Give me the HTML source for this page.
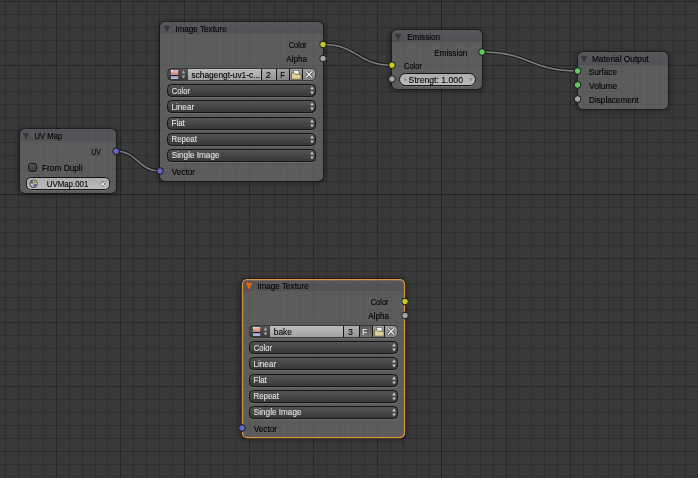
<!DOCTYPE html>
<html><head><meta charset="utf-8"><style>html,body{margin:0;padding:0;background:#393939;overflow:hidden;width:698px;height:478px}text{font-family:'Liberation Sans',sans-serif}</style></head>
<body><svg width="698" height="478" viewBox="0 0 698 478" style="will-change:transform;display:block;font-family:'Liberation Sans',sans-serif"><defs>
<linearGradient id="hdr" x1="0" y1="0" x2="0" y2="1"><stop offset="0" stop-color="rgba(105,104,111,0.65)"/><stop offset="1" stop-color="rgba(96,95,102,0.65)"/></linearGradient>
<linearGradient id="menu" x1="0" y1="0" x2="0" y2="1"><stop offset="0" stop-color="#545454"/><stop offset="1" stop-color="#383838"/></linearGradient>
<linearGradient id="light" x1="0" y1="0" x2="0" y2="1"><stop offset="0" stop-color="#bebebe"/><stop offset="1" stop-color="#a2a2a2"/></linearGradient>
<linearGradient id="light2" x1="0" y1="0" x2="0" y2="1"><stop offset="0" stop-color="#b0b0b0"/><stop offset="1" stop-color="#949494"/></linearGradient>
<linearGradient id="mid" x1="0" y1="0" x2="0" y2="1"><stop offset="0" stop-color="#a0a0a0"/><stop offset="1" stop-color="#858585"/></linearGradient>
<linearGradient id="fsel" x1="0" y1="0" x2="0" y2="1"><stop offset="0" stop-color="#5a5a5a"/><stop offset="1" stop-color="#727272"/></linearGradient>
<linearGradient id="thumb" x1="0" y1="0" x2="0" y2="1"><stop offset="0" stop-color="#e8d0cc"/><stop offset="0.2" stop-color="#e0a8a0"/><stop offset="0.5" stop-color="#c88c88"/><stop offset="0.58" stop-color="#201818"/><stop offset="0.68" stop-color="#201818"/><stop offset="0.72" stop-color="#9c9ccc"/><stop offset="1" stop-color="#b8b8e0"/></linearGradient>
<linearGradient id="pill" x1="0" y1="0" x2="0" y2="1"><stop offset="0" stop-color="#acacac"/><stop offset="1" stop-color="#bcbcbc"/></linearGradient>
</defs><rect x="0" y="0" width="698" height="478" fill="#393939"/><path d="M5 0h1v478h-1zM18 0h1v478h-1zM30 0h1v478h-1zM43 0h1v478h-1zM69 0h1v478h-1zM82 0h1v478h-1zM95 0h1v478h-1zM107 0h1v478h-1zM133 0h1v478h-1zM146 0h1v478h-1zM159 0h1v478h-1zM172 0h1v478h-1zM197 0h1v478h-1zM210 0h1v478h-1zM223 0h1v478h-1zM236 0h1v478h-1zM262 0h1v478h-1zM274 0h1v478h-1zM287 0h1v478h-1zM300 0h1v478h-1zM326 0h1v478h-1zM339 0h1v478h-1zM351 0h1v478h-1zM364 0h1v478h-1zM390 0h1v478h-1zM403 0h1v478h-1zM416 0h1v478h-1zM429 0h1v478h-1zM454 0h1v478h-1zM467 0h1v478h-1zM480 0h1v478h-1zM493 0h1v478h-1zM518 0h1v478h-1zM531 0h1v478h-1zM544 0h1v478h-1zM557 0h1v478h-1zM583 0h1v478h-1zM596 0h1v478h-1zM608 0h1v478h-1zM621 0h1v478h-1zM647 0h1v478h-1zM660 0h1v478h-1zM673 0h1v478h-1zM685 0h1v478h-1zM0 14h698v1h-698zM0 27h698v1h-698zM0 40h698v1h-698zM0 52h698v1h-698zM0 78h698v1h-698zM0 91h698v1h-698zM0 104h698v1h-698zM0 117h698v1h-698zM0 142h698v1h-698zM0 155h698v1h-698zM0 168h698v1h-698zM0 181h698v1h-698zM0 207h698v1h-698zM0 219h698v1h-698zM0 232h698v1h-698zM0 245h698v1h-698zM0 271h698v1h-698zM0 284h698v1h-698zM0 297h698v1h-698zM0 309h698v1h-698zM0 335h698v1h-698zM0 348h698v1h-698zM0 361h698v1h-698zM0 374h698v1h-698zM0 399h698v1h-698zM0 412h698v1h-698zM0 425h698v1h-698zM0 438h698v1h-698zM0 464h698v1h-698zM0 476h698v1h-698z" fill="#2f2f2f"/><path d="M56 0h1v478h-1zM120 0h1v478h-1zM184 0h1v478h-1zM249 0h1v478h-1zM313 0h1v478h-1zM377 0h1v478h-1zM506 0h1v478h-1zM570 0h1v478h-1zM634 0h1v478h-1zM0 1h698v1h-698zM0 65h698v1h-698zM0 130h698v1h-698zM0 258h698v1h-698zM0 322h698v1h-698zM0 386h698v1h-698zM0 451h698v1h-698z" fill="#292929"/><path d="M441 0h1v478h-1zM0 194h698v1h-698z" fill="#232323"/><path d="M116 151.2C138.0 151.2 138.0 171 160 171" fill="none" stroke="#1c1c1c" stroke-width="3.6"/><path d="M116 151.2C138.0 151.2 138.0 171 160 171" fill="none" stroke="#7e7e7e" stroke-width="1.5"/><path d="M323 44.5C357.5 44.5 357.5 65.2 392 65.2" fill="none" stroke="#1c1c1c" stroke-width="3.6"/><path d="M323 44.5C357.5 44.5 357.5 65.2 392 65.2" fill="none" stroke="#7e7e7e" stroke-width="1.5"/><path d="M482 52C529.8 52 529.8 71 577.6 71" fill="none" stroke="#1c1c1c" stroke-width="3.6"/><path d="M482 52C529.8 52 529.8 71 577.6 71" fill="none" stroke="#7e7e7e" stroke-width="1.5"/><path d="M25.00 130.00H111.00A6 6 0 0 1 117.00 136.00V188.00A6 6 0 0 1 111.00 194.00H25.00A6 6 0 0 1 19.00 188.00V136.00A6 6 0 0 1 25.00 130.00ZM25.00 129.00H111.00A5 5 0 0 1 116.00 134.00V188.00A5 5 0 0 1 111.00 193.00H25.00A5 5 0 0 1 20.00 188.00V134.00A5 5 0 0 1 25.00 129.00Z" fill="rgba(0,0,0,0.035)" fill-rule="evenodd"/><path d="M25.00 129.00H111.00A7 7 0 0 1 118.00 136.00V188.00A7 7 0 0 1 111.00 195.00H25.00A7 7 0 0 1 18.00 188.00V136.00A7 7 0 0 1 25.00 129.00ZM25.00 129.00H111.00A5 5 0 0 1 116.00 134.00V188.00A5 5 0 0 1 111.00 193.00H25.00A5 5 0 0 1 20.00 188.00V134.00A5 5 0 0 1 25.00 129.00Z" fill="rgba(0,0,0,0.035)" fill-rule="evenodd"/><path d="M25.00 128.00H111.00A8 8 0 0 1 119.00 136.00V188.00A8 8 0 0 1 111.00 196.00H25.00A8 8 0 0 1 17.00 188.00V136.00A8 8 0 0 1 25.00 128.00ZM25.00 129.00H111.00A5 5 0 0 1 116.00 134.00V188.00A5 5 0 0 1 111.00 193.00H25.00A5 5 0 0 1 20.00 188.00V134.00A5 5 0 0 1 25.00 129.00Z" fill="rgba(0,0,0,0.035)" fill-rule="evenodd"/><path d="M25.00 127.00H111.00A9 9 0 0 1 120.00 136.00V188.00A9 9 0 0 1 111.00 197.00H25.00A9 9 0 0 1 16.00 188.00V136.00A9 9 0 0 1 25.00 127.00ZM25.00 129.00H111.00A5 5 0 0 1 116.00 134.00V188.00A5 5 0 0 1 111.00 193.00H25.00A5 5 0 0 1 20.00 188.00V134.00A5 5 0 0 1 25.00 129.00Z" fill="rgba(0,0,0,0.035)" fill-rule="evenodd"/><path d="M25.00 126.00H111.00A10 10 0 0 1 121.00 136.00V188.00A10 10 0 0 1 111.00 198.00H25.00A10 10 0 0 1 15.00 188.00V136.00A10 10 0 0 1 25.00 126.00ZM25.00 129.00H111.00A5 5 0 0 1 116.00 134.00V188.00A5 5 0 0 1 111.00 193.00H25.00A5 5 0 0 1 20.00 188.00V134.00A5 5 0 0 1 25.00 129.00Z" fill="rgba(0,0,0,0.035)" fill-rule="evenodd"/><path d="M25.00 125.00H111.00A11 11 0 0 1 122.00 136.00V188.00A11 11 0 0 1 111.00 199.00H25.00A11 11 0 0 1 14.00 188.00V136.00A11 11 0 0 1 25.00 125.00ZM25.00 129.00H111.00A5 5 0 0 1 116.00 134.00V188.00A5 5 0 0 1 111.00 193.00H25.00A5 5 0 0 1 20.00 188.00V134.00A5 5 0 0 1 25.00 129.00Z" fill="rgba(0,0,0,0.035)" fill-rule="evenodd"/><path d="M25.00 128.50H111.00A5.5 5.5 0 0 1 116.50 134.00V188.00A5.5 5.5 0 0 1 111.00 193.50H25.00A5.5 5.5 0 0 1 19.50 188.00V134.00A5.5 5.5 0 0 1 25.00 128.50Z" fill="none" stroke="rgba(0,0,0,0.34)" stroke-width="1"/><path d="M20.00 140.50H116.00V188.00A5 5 0 0 1 111.00 193.00H25.00A5 5 0 0 1 20.00 188.00V140.50Z" fill="rgba(110,110,110,0.65)"/><path d="M25.00 129.00H111.00A5 5 0 0 1 116.00 134.00V140.50H20.00V134.00A5 5 0 0 1 25.00 129.00Z" fill="url(#hdr)"/><path d="M22.6 132.8h6.8l-3.4 7z" fill="#38383a"/><text x="34.61" y="138.90" font-size="8.2" fill="#000" stroke="#000" stroke-width="0.1" textLength="27.51" lengthAdjust="spacingAndGlyphs">UV Map</text><text x="91.16" y="154.80" font-size="8.2" fill="#000" stroke="#000" stroke-width="0.1" textLength="9.77" lengthAdjust="spacingAndGlyphs">UV</text><path d="M30.70 164.50H34.30A2.2 2.2 0 0 1 36.50 166.70V170.30A2.2 2.2 0 0 1 34.30 172.50H30.70A2.2 2.2 0 0 1 28.50 170.30V166.70A2.2 2.2 0 0 1 30.70 164.50Z" fill="none" stroke="rgba(255,255,255,0.10)" stroke-width="1"/><path d="M30.70 163.50H34.30A2.2 2.2 0 0 1 36.50 165.70V169.30A2.2 2.2 0 0 1 34.30 171.50H30.70A2.2 2.2 0 0 1 28.50 169.30V165.70A2.2 2.2 0 0 1 30.70 163.50Z" fill="url(#menu)" stroke="#151515" stroke-width="1"/><text x="42.02" y="170.80" font-size="8.2" fill="#000" stroke="#000" stroke-width="0.1" textLength="40.54" lengthAdjust="spacingAndGlyphs">From Dupli</text><path d="M30.50 178.50H105.50A4 4 0 0 1 109.50 182.50V186.50A4 4 0 0 1 105.50 190.50H30.50A4 4 0 0 1 26.50 186.50V182.50A4 4 0 0 1 30.50 178.50Z" fill="none" stroke="rgba(255,255,255,0.10)" stroke-width="1"/><path d="M30.50 177.50H105.50A4 4 0 0 1 109.50 181.50V185.50A4 4 0 0 1 105.50 189.50H30.50A4 4 0 0 1 26.50 185.50V181.50A4 4 0 0 1 30.50 177.50Z" fill="url(#pill)" stroke="#151515" stroke-width="1"/><circle cx="33.5" cy="183.8" r="3.8" fill="#e8e8d8" stroke="#2a2a2a" stroke-width="0.9"/><path d="M33.5 183.8h3.4a3.4 3.4 0 0 1 -3.4 3.4z M33.5 183.8h-3.4a3.4 3.4 0 0 1 3.4 -3.4z" fill="#5a78b8"/><path d="M33.5 183.8v-3.4a3.4 3.4 0 0 1 3.4 3.4z" fill="#d8c860"/><path d="M30.3 182.3h6.4M30.3 185.3h6.4M32 180.5v6.6M35 180.5v6.6" stroke="#404040" stroke-width="0.5" opacity="0.7"/><text x="46.69" y="186.80" font-size="8.2" fill="#000" stroke="#000" stroke-width="0.1" textLength="41.69" lengthAdjust="spacingAndGlyphs">UVMap.001</text><path d="M100.6 181.8l4.2 4.2M104.8 181.8l-4.2 4.2" stroke="#404040" stroke-width="2.4"/><path d="M100.6 181.8l4.2 4.2M104.8 181.8l-4.2 4.2" stroke="#f4f4f4" stroke-width="1.2"/><circle cx="116" cy="151.2" r="3.3" fill="#6363c7" stroke="#181818" stroke-width="1.0"/><path d="M165.00 23.00H318.00A6 6 0 0 1 324.00 29.00V176.00A6 6 0 0 1 318.00 182.00H165.00A6 6 0 0 1 159.00 176.00V29.00A6 6 0 0 1 165.00 23.00ZM165.00 22.00H318.00A5 5 0 0 1 323.00 27.00V176.00A5 5 0 0 1 318.00 181.00H165.00A5 5 0 0 1 160.00 176.00V27.00A5 5 0 0 1 165.00 22.00Z" fill="rgba(0,0,0,0.035)" fill-rule="evenodd"/><path d="M165.00 22.00H318.00A7 7 0 0 1 325.00 29.00V176.00A7 7 0 0 1 318.00 183.00H165.00A7 7 0 0 1 158.00 176.00V29.00A7 7 0 0 1 165.00 22.00ZM165.00 22.00H318.00A5 5 0 0 1 323.00 27.00V176.00A5 5 0 0 1 318.00 181.00H165.00A5 5 0 0 1 160.00 176.00V27.00A5 5 0 0 1 165.00 22.00Z" fill="rgba(0,0,0,0.035)" fill-rule="evenodd"/><path d="M165.00 21.00H318.00A8 8 0 0 1 326.00 29.00V176.00A8 8 0 0 1 318.00 184.00H165.00A8 8 0 0 1 157.00 176.00V29.00A8 8 0 0 1 165.00 21.00ZM165.00 22.00H318.00A5 5 0 0 1 323.00 27.00V176.00A5 5 0 0 1 318.00 181.00H165.00A5 5 0 0 1 160.00 176.00V27.00A5 5 0 0 1 165.00 22.00Z" fill="rgba(0,0,0,0.035)" fill-rule="evenodd"/><path d="M165.00 20.00H318.00A9 9 0 0 1 327.00 29.00V176.00A9 9 0 0 1 318.00 185.00H165.00A9 9 0 0 1 156.00 176.00V29.00A9 9 0 0 1 165.00 20.00ZM165.00 22.00H318.00A5 5 0 0 1 323.00 27.00V176.00A5 5 0 0 1 318.00 181.00H165.00A5 5 0 0 1 160.00 176.00V27.00A5 5 0 0 1 165.00 22.00Z" fill="rgba(0,0,0,0.035)" fill-rule="evenodd"/><path d="M165.00 19.00H318.00A10 10 0 0 1 328.00 29.00V176.00A10 10 0 0 1 318.00 186.00H165.00A10 10 0 0 1 155.00 176.00V29.00A10 10 0 0 1 165.00 19.00ZM165.00 22.00H318.00A5 5 0 0 1 323.00 27.00V176.00A5 5 0 0 1 318.00 181.00H165.00A5 5 0 0 1 160.00 176.00V27.00A5 5 0 0 1 165.00 22.00Z" fill="rgba(0,0,0,0.035)" fill-rule="evenodd"/><path d="M165.00 18.00H318.00A11 11 0 0 1 329.00 29.00V176.00A11 11 0 0 1 318.00 187.00H165.00A11 11 0 0 1 154.00 176.00V29.00A11 11 0 0 1 165.00 18.00ZM165.00 22.00H318.00A5 5 0 0 1 323.00 27.00V176.00A5 5 0 0 1 318.00 181.00H165.00A5 5 0 0 1 160.00 176.00V27.00A5 5 0 0 1 165.00 22.00Z" fill="rgba(0,0,0,0.035)" fill-rule="evenodd"/><path d="M165.00 21.50H318.00A5.5 5.5 0 0 1 323.50 27.00V176.00A5.5 5.5 0 0 1 318.00 181.50H165.00A5.5 5.5 0 0 1 159.50 176.00V27.00A5.5 5.5 0 0 1 165.00 21.50Z" fill="none" stroke="rgba(0,0,0,0.34)" stroke-width="1"/><path d="M160.00 34.00H323.00V176.00A5 5 0 0 1 318.00 181.00H165.00A5 5 0 0 1 160.00 176.00V34.00Z" fill="rgba(110,110,110,0.65)"/><path d="M165.00 22.00H318.00A5 5 0 0 1 323.00 27.00V34.00H160.00V27.00A5 5 0 0 1 165.00 22.00Z" fill="url(#hdr)"/><path d="M163.6 25.8h6.8l-3.4 7z" fill="#38383a"/><text x="175.16" y="31.90" font-size="8.2" fill="#000" stroke="#000" stroke-width="0.1" textLength="51.59" lengthAdjust="spacingAndGlyphs">Image Texture</text><text x="288.72" y="47.90" font-size="8.2" fill="#000" stroke="#000" stroke-width="0.1" textLength="17.90" lengthAdjust="spacingAndGlyphs">Color</text><text x="286.18" y="61.80" font-size="8.2" fill="#000" stroke="#000" stroke-width="0.1" textLength="20.82" lengthAdjust="spacingAndGlyphs">Alpha</text><path d="M171.50 69.50H311.50A4 4 0 0 1 315.50 73.50V77.50A4 4 0 0 1 311.50 81.50H171.50A4 4 0 0 1 167.50 77.50V73.50A4 4 0 0 1 171.50 69.50Z" fill="none" stroke="rgba(255,255,255,0.10)" stroke-width="1"/><path d="M171.50 68.50H311.50A4 4 0 0 1 315.50 72.50V76.50A4 4 0 0 1 311.50 80.50H171.50A4 4 0 0 1 167.50 76.50V72.50A4 4 0 0 1 171.50 68.50Z" fill="#151515"/><path d="M171.50 69.00H188.00V80.00H171.50A3.5 3.5 0 0 1 168.00 76.50V72.50A3.5 3.5 0 0 1 171.50 69.00Z" fill="url(#menu)"/><rect x="171" y="70" width="7.2" height="9" fill="url(#thumb)"/><path d="M171 70h2l-2 2z" fill="#f8f8f8"/><path d="M181.7 73.6L183.5 70.2L185.3 73.6Z M181.7 75.4L183.5 78.6L185.3 75.4Z" fill="#a8a8a8"/><rect x="188" y="69" width="73" height="11" fill="url(#light)"/><text x="191.47" y="78.00" font-size="8.2" fill="#000" stroke="#000" stroke-width="0.1" textLength="68.69" lengthAdjust="spacingAndGlyphs">schagengt-uv1-c...</text><rect x="262" y="69" width="14" height="11" fill="url(#light2)"/><text x="265.84" y="77.80" font-size="8.2" fill="#000" stroke="#000" stroke-width="0.1" textLength="5.13" lengthAdjust="spacingAndGlyphs">2</text><rect x="277" y="69" width="12" height="11" fill="url(#mid)"/><text x="280.16" y="77.80" font-size="8.2" fill="#000" stroke="#000" stroke-width="0.1" textLength="4.75" lengthAdjust="spacingAndGlyphs">F</text><rect x="290" y="69" width="12" height="11" fill="url(#mid)"/><rect x="293.5" y="70.5" width="5.5" height="4" fill="#f4f4f4" stroke="#505050" stroke-width="0.5"/><path d="M291.5 73h3l1 1.2h5.5v5h-9.5z" fill="#dcd09a" stroke="#4a4428" stroke-width="0.6"/><path d="M303.00 69.00H311.50A3.5 3.5 0 0 1 315.00 72.50V76.50A3.5 3.5 0 0 1 311.50 80.00H303.00V69.00Z" fill="url(#mid)"/><path d="M306.0 71.5l6 6M312.0 71.5l-6 6" stroke="rgba(30,30,30,0.6)" stroke-width="2.8"/><path d="M306.0 71.5l6 6M312.0 71.5l-6 6" stroke="#f0f0f0" stroke-width="1.2"/><path d="M171.50 85.50H311.50A4 4 0 0 1 315.50 89.50V93.50A4 4 0 0 1 311.50 97.50H171.50A4 4 0 0 1 167.50 93.50V89.50A4 4 0 0 1 171.50 85.50Z" fill="none" stroke="rgba(255,255,255,0.10)" stroke-width="1"/><path d="M171.50 84.50H311.50A4 4 0 0 1 315.50 88.50V92.50A4 4 0 0 1 311.50 96.50H171.50A4 4 0 0 1 167.50 92.50V88.50A4 4 0 0 1 171.50 84.50Z" fill="url(#menu)" stroke="#151515" stroke-width="1"/><text x="171.82" y="93.80" font-size="8.2" fill="#e4e4e4" stroke="#e4e4e4" stroke-width="0.1" textLength="18.11" lengthAdjust="spacingAndGlyphs">Color</text><path d="M310.2 89.6L312.0 86.2L313.8 89.6Z M310.2 91.4L312.0 94.6L313.8 91.4Z" fill="#c8c8c8"/><path d="M171.50 101.50H311.50A4 4 0 0 1 315.50 105.50V109.50A4 4 0 0 1 311.50 113.50H171.50A4 4 0 0 1 167.50 109.50V105.50A4 4 0 0 1 171.50 101.50Z" fill="none" stroke="rgba(255,255,255,0.10)" stroke-width="1"/><path d="M171.50 100.50H311.50A4 4 0 0 1 315.50 104.50V108.50A4 4 0 0 1 311.50 112.50H171.50A4 4 0 0 1 167.50 108.50V104.50A4 4 0 0 1 171.50 100.50Z" fill="url(#menu)" stroke="#151515" stroke-width="1"/><text x="171.53" y="109.90" font-size="8.2" fill="#e4e4e4" stroke="#e4e4e4" stroke-width="0.1" textLength="22.60" lengthAdjust="spacingAndGlyphs">Linear</text><path d="M310.2 105.6L312.0 102.2L313.8 105.6Z M310.2 107.4L312.0 110.6L313.8 107.4Z" fill="#c8c8c8"/><path d="M171.50 118.50H311.50A4 4 0 0 1 315.50 122.50V126.50A4 4 0 0 1 311.50 130.50H171.50A4 4 0 0 1 167.50 126.50V122.50A4 4 0 0 1 171.50 118.50Z" fill="none" stroke="rgba(255,255,255,0.10)" stroke-width="1"/><path d="M171.50 117.50H311.50A4 4 0 0 1 315.50 121.50V125.50A4 4 0 0 1 311.50 129.50H171.50A4 4 0 0 1 167.50 125.50V121.50A4 4 0 0 1 171.50 117.50Z" fill="url(#menu)" stroke="#151515" stroke-width="1"/><text x="171.55" y="125.70" font-size="8.2" fill="#e4e4e4" stroke="#e4e4e4" stroke-width="0.1" textLength="13.26" lengthAdjust="spacingAndGlyphs">Flat</text><path d="M310.2 122.6L312.0 119.2L313.8 122.6Z M310.2 124.4L312.0 127.6L313.8 124.4Z" fill="#c8c8c8"/><path d="M171.50 134.50H311.50A4 4 0 0 1 315.50 138.50V142.50A4 4 0 0 1 311.50 146.50H171.50A4 4 0 0 1 167.50 142.50V138.50A4 4 0 0 1 171.50 134.50Z" fill="none" stroke="rgba(255,255,255,0.10)" stroke-width="1"/><path d="M171.50 133.50H311.50A4 4 0 0 1 315.50 137.50V141.50A4 4 0 0 1 311.50 145.50H171.50A4 4 0 0 1 167.50 141.50V137.50A4 4 0 0 1 171.50 133.50Z" fill="url(#menu)" stroke="#151515" stroke-width="1"/><text x="171.56" y="141.70" font-size="8.2" fill="#e4e4e4" stroke="#e4e4e4" stroke-width="0.1" textLength="25.30" lengthAdjust="spacingAndGlyphs">Repeat</text><path d="M310.2 138.6L312.0 135.2L313.8 138.6Z M310.2 140.4L312.0 143.6L313.8 140.4Z" fill="#c8c8c8"/><path d="M171.50 150.50H311.50A4 4 0 0 1 315.50 154.50V158.50A4 4 0 0 1 311.50 162.50H171.50A4 4 0 0 1 167.50 158.50V154.50A4 4 0 0 1 171.50 150.50Z" fill="none" stroke="rgba(255,255,255,0.10)" stroke-width="1"/><path d="M171.50 149.50H311.50A4 4 0 0 1 315.50 153.50V157.50A4 4 0 0 1 311.50 161.50H171.50A4 4 0 0 1 167.50 157.50V153.50A4 4 0 0 1 171.50 149.50Z" fill="url(#menu)" stroke="#151515" stroke-width="1"/><text x="171.83" y="157.60" font-size="8.2" fill="#e4e4e4" stroke="#e4e4e4" stroke-width="0.1" textLength="47.63" lengthAdjust="spacingAndGlyphs">Single Image</text><path d="M310.2 154.6L312.0 151.2L313.8 154.6Z M310.2 156.4L312.0 159.6L313.8 156.4Z" fill="#c8c8c8"/><text x="171.76" y="174.80" font-size="8.2" fill="#000" stroke="#000" stroke-width="0.1" textLength="23.27" lengthAdjust="spacingAndGlyphs">Vector</text><circle cx="323" cy="44.5" r="3.3" fill="#c8c829" stroke="#181818" stroke-width="1.0"/><circle cx="323" cy="58.5" r="3.3" fill="#a3a3a3" stroke="#181818" stroke-width="1.0"/><circle cx="160" cy="171" r="3.3" fill="#6363c7" stroke="#181818" stroke-width="1.0"/><path d="M247.00 280.00H400.00A6 6 0 0 1 406.00 286.00V433.00A6 6 0 0 1 400.00 439.00H247.00A6 6 0 0 1 241.00 433.00V286.00A6 6 0 0 1 247.00 280.00ZM247.00 279.00H400.00A5 5 0 0 1 405.00 284.00V433.00A5 5 0 0 1 400.00 438.00H247.00A5 5 0 0 1 242.00 433.00V284.00A5 5 0 0 1 247.00 279.00Z" fill="rgba(0,0,0,0.035)" fill-rule="evenodd"/><path d="M247.00 279.00H400.00A7 7 0 0 1 407.00 286.00V433.00A7 7 0 0 1 400.00 440.00H247.00A7 7 0 0 1 240.00 433.00V286.00A7 7 0 0 1 247.00 279.00ZM247.00 279.00H400.00A5 5 0 0 1 405.00 284.00V433.00A5 5 0 0 1 400.00 438.00H247.00A5 5 0 0 1 242.00 433.00V284.00A5 5 0 0 1 247.00 279.00Z" fill="rgba(0,0,0,0.035)" fill-rule="evenodd"/><path d="M247.00 278.00H400.00A8 8 0 0 1 408.00 286.00V433.00A8 8 0 0 1 400.00 441.00H247.00A8 8 0 0 1 239.00 433.00V286.00A8 8 0 0 1 247.00 278.00ZM247.00 279.00H400.00A5 5 0 0 1 405.00 284.00V433.00A5 5 0 0 1 400.00 438.00H247.00A5 5 0 0 1 242.00 433.00V284.00A5 5 0 0 1 247.00 279.00Z" fill="rgba(0,0,0,0.035)" fill-rule="evenodd"/><path d="M247.00 277.00H400.00A9 9 0 0 1 409.00 286.00V433.00A9 9 0 0 1 400.00 442.00H247.00A9 9 0 0 1 238.00 433.00V286.00A9 9 0 0 1 247.00 277.00ZM247.00 279.00H400.00A5 5 0 0 1 405.00 284.00V433.00A5 5 0 0 1 400.00 438.00H247.00A5 5 0 0 1 242.00 433.00V284.00A5 5 0 0 1 247.00 279.00Z" fill="rgba(0,0,0,0.035)" fill-rule="evenodd"/><path d="M247.00 276.00H400.00A10 10 0 0 1 410.00 286.00V433.00A10 10 0 0 1 400.00 443.00H247.00A10 10 0 0 1 237.00 433.00V286.00A10 10 0 0 1 247.00 276.00ZM247.00 279.00H400.00A5 5 0 0 1 405.00 284.00V433.00A5 5 0 0 1 400.00 438.00H247.00A5 5 0 0 1 242.00 433.00V284.00A5 5 0 0 1 247.00 279.00Z" fill="rgba(0,0,0,0.035)" fill-rule="evenodd"/><path d="M247.00 275.00H400.00A11 11 0 0 1 411.00 286.00V433.00A11 11 0 0 1 400.00 444.00H247.00A11 11 0 0 1 236.00 433.00V286.00A11 11 0 0 1 247.00 275.00ZM247.00 279.00H400.00A5 5 0 0 1 405.00 284.00V433.00A5 5 0 0 1 400.00 438.00H247.00A5 5 0 0 1 242.00 433.00V284.00A5 5 0 0 1 247.00 279.00Z" fill="rgba(0,0,0,0.035)" fill-rule="evenodd"/><path d="M247.00 278.50H400.00A5.5 5.5 0 0 1 405.50 284.00V433.00A5.5 5.5 0 0 1 400.00 438.50H247.00A5.5 5.5 0 0 1 241.50 433.00V284.00A5.5 5.5 0 0 1 247.00 278.50Z" fill="none" stroke="rgba(0,0,0,0.34)" stroke-width="1"/><path d="M242.00 291.00H405.00V433.00A5 5 0 0 1 400.00 438.00H247.00A5 5 0 0 1 242.00 433.00V291.00Z" fill="rgba(110,110,110,0.65)"/><path d="M247.00 279.00H400.00A5 5 0 0 1 405.00 284.00V291.00H242.00V284.00A5 5 0 0 1 247.00 279.00Z" fill="url(#hdr)"/><path d="M247.00 279.50H400.00A4.5 4.5 0 0 1 404.50 284.00V433.00A4.5 4.5 0 0 1 400.00 437.50H247.00A4.5 4.5 0 0 1 242.50 433.00V284.00A4.5 4.5 0 0 1 247.00 279.50Z" fill="none" stroke="#d8963e" stroke-width="1.25"/><path d="M245.6 282.8h6.8l-3.4 7z" fill="#e2651a"/><text x="257.16" y="288.90" font-size="8.2" fill="#000" stroke="#000" stroke-width="0.1" textLength="51.59" lengthAdjust="spacingAndGlyphs">Image Texture</text><text x="370.72" y="304.90" font-size="8.2" fill="#000" stroke="#000" stroke-width="0.1" textLength="17.90" lengthAdjust="spacingAndGlyphs">Color</text><text x="368.18" y="318.80" font-size="8.2" fill="#000" stroke="#000" stroke-width="0.1" textLength="20.82" lengthAdjust="spacingAndGlyphs">Alpha</text><path d="M253.50 326.50H393.50A4 4 0 0 1 397.50 330.50V334.50A4 4 0 0 1 393.50 338.50H253.50A4 4 0 0 1 249.50 334.50V330.50A4 4 0 0 1 253.50 326.50Z" fill="none" stroke="rgba(255,255,255,0.10)" stroke-width="1"/><path d="M253.50 325.50H393.50A4 4 0 0 1 397.50 329.50V333.50A4 4 0 0 1 393.50 337.50H253.50A4 4 0 0 1 249.50 333.50V329.50A4 4 0 0 1 253.50 325.50Z" fill="#151515"/><path d="M253.50 326.00H270.00V337.00H253.50A3.5 3.5 0 0 1 250.00 333.50V329.50A3.5 3.5 0 0 1 253.50 326.00Z" fill="url(#menu)"/><rect x="253" y="327" width="7.2" height="9" fill="url(#thumb)"/><path d="M253 327h2l-2 2z" fill="#f8f8f8"/><path d="M263.7 330.6L265.5 327.2L267.3 330.6Z M263.7 332.4L265.5 335.6L267.3 332.4Z" fill="#a8a8a8"/><rect x="270" y="326" width="73" height="11" fill="url(#light)"/><text x="273.87" y="335.00" font-size="8.2" fill="#000" stroke="#000" stroke-width="0.1" textLength="17.90" lengthAdjust="spacingAndGlyphs">bake</text><rect x="344" y="326" width="15" height="11" fill="url(#light2)"/><text x="347.96" y="334.80" font-size="8.2" fill="#000" stroke="#000" stroke-width="0.1" textLength="4.93" lengthAdjust="spacingAndGlyphs">3</text><rect x="360" y="326" width="12" height="11" fill="url(#fsel)"/><text x="362.16" y="334.80" font-size="8.2" fill="#f0f0f0" stroke="#f0f0f0" stroke-width="0.1" textLength="4.75" lengthAdjust="spacingAndGlyphs">F</text><rect x="373" y="326" width="11" height="11" fill="url(#mid)"/><rect x="376.5" y="327.5" width="5.5" height="4" fill="#f4f4f4" stroke="#505050" stroke-width="0.5"/><path d="M374.5 330h3l1 1.2h5.5v5h-9.5z" fill="#dcd09a" stroke="#4a4428" stroke-width="0.6"/><path d="M385.00 326.00H393.50A3.5 3.5 0 0 1 397.00 329.50V333.50A3.5 3.5 0 0 1 393.50 337.00H385.00V326.00Z" fill="url(#mid)"/><path d="M388.0 328.5l6 6M394.0 328.5l-6 6" stroke="rgba(30,30,30,0.6)" stroke-width="2.8"/><path d="M388.0 328.5l6 6M394.0 328.5l-6 6" stroke="#f0f0f0" stroke-width="1.2"/><path d="M253.50 342.50H393.50A4 4 0 0 1 397.50 346.50V350.50A4 4 0 0 1 393.50 354.50H253.50A4 4 0 0 1 249.50 350.50V346.50A4 4 0 0 1 253.50 342.50Z" fill="none" stroke="rgba(255,255,255,0.10)" stroke-width="1"/><path d="M253.50 341.50H393.50A4 4 0 0 1 397.50 345.50V349.50A4 4 0 0 1 393.50 353.50H253.50A4 4 0 0 1 249.50 349.50V345.50A4 4 0 0 1 253.50 341.50Z" fill="url(#menu)" stroke="#151515" stroke-width="1"/><text x="253.82" y="350.80" font-size="8.2" fill="#e4e4e4" stroke="#e4e4e4" stroke-width="0.1" textLength="18.11" lengthAdjust="spacingAndGlyphs">Color</text><path d="M392.2 346.6L394.0 343.2L395.8 346.6Z M392.2 348.4L394.0 351.6L395.8 348.4Z" fill="#c8c8c8"/><path d="M253.50 358.50H393.50A4 4 0 0 1 397.50 362.50V366.50A4 4 0 0 1 393.50 370.50H253.50A4 4 0 0 1 249.50 366.50V362.50A4 4 0 0 1 253.50 358.50Z" fill="none" stroke="rgba(255,255,255,0.10)" stroke-width="1"/><path d="M253.50 357.50H393.50A4 4 0 0 1 397.50 361.50V365.50A4 4 0 0 1 393.50 369.50H253.50A4 4 0 0 1 249.50 365.50V361.50A4 4 0 0 1 253.50 357.50Z" fill="url(#menu)" stroke="#151515" stroke-width="1"/><text x="253.53" y="366.90" font-size="8.2" fill="#e4e4e4" stroke="#e4e4e4" stroke-width="0.1" textLength="22.60" lengthAdjust="spacingAndGlyphs">Linear</text><path d="M392.2 362.6L394.0 359.2L395.8 362.6Z M392.2 364.4L394.0 367.6L395.8 364.4Z" fill="#c8c8c8"/><path d="M253.50 375.50H393.50A4 4 0 0 1 397.50 379.50V383.50A4 4 0 0 1 393.50 387.50H253.50A4 4 0 0 1 249.50 383.50V379.50A4 4 0 0 1 253.50 375.50Z" fill="none" stroke="rgba(255,255,255,0.10)" stroke-width="1"/><path d="M253.50 374.50H393.50A4 4 0 0 1 397.50 378.50V382.50A4 4 0 0 1 393.50 386.50H253.50A4 4 0 0 1 249.50 382.50V378.50A4 4 0 0 1 253.50 374.50Z" fill="url(#menu)" stroke="#151515" stroke-width="1"/><text x="253.55" y="382.70" font-size="8.2" fill="#e4e4e4" stroke="#e4e4e4" stroke-width="0.1" textLength="13.26" lengthAdjust="spacingAndGlyphs">Flat</text><path d="M392.2 379.6L394.0 376.2L395.8 379.6Z M392.2 381.4L394.0 384.6L395.8 381.4Z" fill="#c8c8c8"/><path d="M253.50 391.50H393.50A4 4 0 0 1 397.50 395.50V399.50A4 4 0 0 1 393.50 403.50H253.50A4 4 0 0 1 249.50 399.50V395.50A4 4 0 0 1 253.50 391.50Z" fill="none" stroke="rgba(255,255,255,0.10)" stroke-width="1"/><path d="M253.50 390.50H393.50A4 4 0 0 1 397.50 394.50V398.50A4 4 0 0 1 393.50 402.50H253.50A4 4 0 0 1 249.50 398.50V394.50A4 4 0 0 1 253.50 390.50Z" fill="url(#menu)" stroke="#151515" stroke-width="1"/><text x="253.56" y="398.70" font-size="8.2" fill="#e4e4e4" stroke="#e4e4e4" stroke-width="0.1" textLength="25.30" lengthAdjust="spacingAndGlyphs">Repeat</text><path d="M392.2 395.6L394.0 392.2L395.8 395.6Z M392.2 397.4L394.0 400.6L395.8 397.4Z" fill="#c8c8c8"/><path d="M253.50 407.50H393.50A4 4 0 0 1 397.50 411.50V415.50A4 4 0 0 1 393.50 419.50H253.50A4 4 0 0 1 249.50 415.50V411.50A4 4 0 0 1 253.50 407.50Z" fill="none" stroke="rgba(255,255,255,0.10)" stroke-width="1"/><path d="M253.50 406.50H393.50A4 4 0 0 1 397.50 410.50V414.50A4 4 0 0 1 393.50 418.50H253.50A4 4 0 0 1 249.50 414.50V410.50A4 4 0 0 1 253.50 406.50Z" fill="url(#menu)" stroke="#151515" stroke-width="1"/><text x="253.83" y="414.60" font-size="8.2" fill="#e4e4e4" stroke="#e4e4e4" stroke-width="0.1" textLength="47.63" lengthAdjust="spacingAndGlyphs">Single Image</text><path d="M392.2 411.6L394.0 408.2L395.8 411.6Z M392.2 413.4L394.0 416.6L395.8 413.4Z" fill="#c8c8c8"/><text x="253.76" y="431.80" font-size="8.2" fill="#000" stroke="#000" stroke-width="0.1" textLength="23.27" lengthAdjust="spacingAndGlyphs">Vector</text><circle cx="405" cy="301.5" r="3.3" fill="#c8c829" stroke="#181818" stroke-width="1.0"/><circle cx="405" cy="315.5" r="3.3" fill="#a3a3a3" stroke="#181818" stroke-width="1.0"/><circle cx="242" cy="428" r="3.3" fill="#6363c7" stroke="#181818" stroke-width="1.0"/><path d="M397.00 31.00H477.00A6 6 0 0 1 483.00 37.00V84.00A6 6 0 0 1 477.00 90.00H397.00A6 6 0 0 1 391.00 84.00V37.00A6 6 0 0 1 397.00 31.00ZM397.00 30.00H477.00A5 5 0 0 1 482.00 35.00V84.00A5 5 0 0 1 477.00 89.00H397.00A5 5 0 0 1 392.00 84.00V35.00A5 5 0 0 1 397.00 30.00Z" fill="rgba(0,0,0,0.035)" fill-rule="evenodd"/><path d="M397.00 30.00H477.00A7 7 0 0 1 484.00 37.00V84.00A7 7 0 0 1 477.00 91.00H397.00A7 7 0 0 1 390.00 84.00V37.00A7 7 0 0 1 397.00 30.00ZM397.00 30.00H477.00A5 5 0 0 1 482.00 35.00V84.00A5 5 0 0 1 477.00 89.00H397.00A5 5 0 0 1 392.00 84.00V35.00A5 5 0 0 1 397.00 30.00Z" fill="rgba(0,0,0,0.035)" fill-rule="evenodd"/><path d="M397.00 29.00H477.00A8 8 0 0 1 485.00 37.00V84.00A8 8 0 0 1 477.00 92.00H397.00A8 8 0 0 1 389.00 84.00V37.00A8 8 0 0 1 397.00 29.00ZM397.00 30.00H477.00A5 5 0 0 1 482.00 35.00V84.00A5 5 0 0 1 477.00 89.00H397.00A5 5 0 0 1 392.00 84.00V35.00A5 5 0 0 1 397.00 30.00Z" fill="rgba(0,0,0,0.035)" fill-rule="evenodd"/><path d="M397.00 28.00H477.00A9 9 0 0 1 486.00 37.00V84.00A9 9 0 0 1 477.00 93.00H397.00A9 9 0 0 1 388.00 84.00V37.00A9 9 0 0 1 397.00 28.00ZM397.00 30.00H477.00A5 5 0 0 1 482.00 35.00V84.00A5 5 0 0 1 477.00 89.00H397.00A5 5 0 0 1 392.00 84.00V35.00A5 5 0 0 1 397.00 30.00Z" fill="rgba(0,0,0,0.035)" fill-rule="evenodd"/><path d="M397.00 27.00H477.00A10 10 0 0 1 487.00 37.00V84.00A10 10 0 0 1 477.00 94.00H397.00A10 10 0 0 1 387.00 84.00V37.00A10 10 0 0 1 397.00 27.00ZM397.00 30.00H477.00A5 5 0 0 1 482.00 35.00V84.00A5 5 0 0 1 477.00 89.00H397.00A5 5 0 0 1 392.00 84.00V35.00A5 5 0 0 1 397.00 30.00Z" fill="rgba(0,0,0,0.035)" fill-rule="evenodd"/><path d="M397.00 26.00H477.00A11 11 0 0 1 488.00 37.00V84.00A11 11 0 0 1 477.00 95.00H397.00A11 11 0 0 1 386.00 84.00V37.00A11 11 0 0 1 397.00 26.00ZM397.00 30.00H477.00A5 5 0 0 1 482.00 35.00V84.00A5 5 0 0 1 477.00 89.00H397.00A5 5 0 0 1 392.00 84.00V35.00A5 5 0 0 1 397.00 30.00Z" fill="rgba(0,0,0,0.035)" fill-rule="evenodd"/><path d="M397.00 29.50H477.00A5.5 5.5 0 0 1 482.50 35.00V84.00A5.5 5.5 0 0 1 477.00 89.50H397.00A5.5 5.5 0 0 1 391.50 84.00V35.00A5.5 5.5 0 0 1 397.00 29.50Z" fill="none" stroke="rgba(0,0,0,0.34)" stroke-width="1"/><path d="M392.00 41.50H482.00V84.00A5 5 0 0 1 477.00 89.00H397.00A5 5 0 0 1 392.00 84.00V41.50Z" fill="rgba(110,110,110,0.65)"/><path d="M397.00 30.00H477.00A5 5 0 0 1 482.00 35.00V41.50H392.00V35.00A5 5 0 0 1 397.00 30.00Z" fill="url(#hdr)"/><path d="M394.6 33.8h6.8l-3.4 7z" fill="#38383a"/><text x="407.13" y="39.80" font-size="8.2" fill="#000" stroke="#000" stroke-width="0.1" textLength="32.89" lengthAdjust="spacingAndGlyphs">Emission</text><text x="434.33" y="55.80" font-size="8.2" fill="#000" stroke="#000" stroke-width="0.1" textLength="32.89" lengthAdjust="spacingAndGlyphs">Emission</text><text x="404.02" y="68.70" font-size="8.2" fill="#000" stroke="#000" stroke-width="0.1" textLength="17.90" lengthAdjust="spacingAndGlyphs">Color</text><path d="M405.50 74.50H469.50A6 6 0 0 1 475.50 80.50V80.50A6 6 0 0 1 469.50 86.50H405.50A6 6 0 0 1 399.50 80.50V80.50A6 6 0 0 1 405.50 74.50Z" fill="none" stroke="rgba(255,255,255,0.10)" stroke-width="1"/><path d="M405.50 73.50H469.50A6 6 0 0 1 475.50 79.50V79.50A6 6 0 0 1 469.50 85.50H405.50A6 6 0 0 1 399.50 79.50V79.50A6 6 0 0 1 405.50 73.50Z" fill="url(#pill)" stroke="#151515" stroke-width="1"/><path d="M406.2 77.3l-2.6 2.3l2.6 2.3z M469.8 77.3l2.6 2.3l-2.6 2.3z" fill="#8a8a8a"/><text x="408.61" y="82.80" font-size="8.2" fill="#000" stroke="#000" stroke-width="0.1" textLength="54.33" lengthAdjust="spacingAndGlyphs">Strengt: 1.000</text><circle cx="482" cy="52" r="3.3" fill="#63c763" stroke="#181818" stroke-width="1.0"/><circle cx="392" cy="65.2" r="3.3" fill="#c8c829" stroke="#181818" stroke-width="1.0"/><circle cx="392" cy="79" r="3.3" fill="#a3a3a3" stroke="#181818" stroke-width="1.0"/><path d="M583.00 53.00H663.00A6 6 0 0 1 669.00 59.00V104.00A6 6 0 0 1 663.00 110.00H583.00A6 6 0 0 1 577.00 104.00V59.00A6 6 0 0 1 583.00 53.00ZM583.00 52.00H663.00A5 5 0 0 1 668.00 57.00V104.00A5 5 0 0 1 663.00 109.00H583.00A5 5 0 0 1 578.00 104.00V57.00A5 5 0 0 1 583.00 52.00Z" fill="rgba(0,0,0,0.035)" fill-rule="evenodd"/><path d="M583.00 52.00H663.00A7 7 0 0 1 670.00 59.00V104.00A7 7 0 0 1 663.00 111.00H583.00A7 7 0 0 1 576.00 104.00V59.00A7 7 0 0 1 583.00 52.00ZM583.00 52.00H663.00A5 5 0 0 1 668.00 57.00V104.00A5 5 0 0 1 663.00 109.00H583.00A5 5 0 0 1 578.00 104.00V57.00A5 5 0 0 1 583.00 52.00Z" fill="rgba(0,0,0,0.035)" fill-rule="evenodd"/><path d="M583.00 51.00H663.00A8 8 0 0 1 671.00 59.00V104.00A8 8 0 0 1 663.00 112.00H583.00A8 8 0 0 1 575.00 104.00V59.00A8 8 0 0 1 583.00 51.00ZM583.00 52.00H663.00A5 5 0 0 1 668.00 57.00V104.00A5 5 0 0 1 663.00 109.00H583.00A5 5 0 0 1 578.00 104.00V57.00A5 5 0 0 1 583.00 52.00Z" fill="rgba(0,0,0,0.035)" fill-rule="evenodd"/><path d="M583.00 50.00H663.00A9 9 0 0 1 672.00 59.00V104.00A9 9 0 0 1 663.00 113.00H583.00A9 9 0 0 1 574.00 104.00V59.00A9 9 0 0 1 583.00 50.00ZM583.00 52.00H663.00A5 5 0 0 1 668.00 57.00V104.00A5 5 0 0 1 663.00 109.00H583.00A5 5 0 0 1 578.00 104.00V57.00A5 5 0 0 1 583.00 52.00Z" fill="rgba(0,0,0,0.035)" fill-rule="evenodd"/><path d="M583.00 49.00H663.00A10 10 0 0 1 673.00 59.00V104.00A10 10 0 0 1 663.00 114.00H583.00A10 10 0 0 1 573.00 104.00V59.00A10 10 0 0 1 583.00 49.00ZM583.00 52.00H663.00A5 5 0 0 1 668.00 57.00V104.00A5 5 0 0 1 663.00 109.00H583.00A5 5 0 0 1 578.00 104.00V57.00A5 5 0 0 1 583.00 52.00Z" fill="rgba(0,0,0,0.035)" fill-rule="evenodd"/><path d="M583.00 48.00H663.00A11 11 0 0 1 674.00 59.00V104.00A11 11 0 0 1 663.00 115.00H583.00A11 11 0 0 1 572.00 104.00V59.00A11 11 0 0 1 583.00 48.00ZM583.00 52.00H663.00A5 5 0 0 1 668.00 57.00V104.00A5 5 0 0 1 663.00 109.00H583.00A5 5 0 0 1 578.00 104.00V57.00A5 5 0 0 1 583.00 52.00Z" fill="rgba(0,0,0,0.035)" fill-rule="evenodd"/><path d="M583.00 51.50H663.00A5.5 5.5 0 0 1 668.50 57.00V104.00A5.5 5.5 0 0 1 663.00 109.50H583.00A5.5 5.5 0 0 1 577.50 104.00V57.00A5.5 5.5 0 0 1 583.00 51.50Z" fill="none" stroke="rgba(0,0,0,0.34)" stroke-width="1"/><path d="M578.00 64.50H668.00V104.00A5 5 0 0 1 663.00 109.00H583.00A5 5 0 0 1 578.00 104.00V64.50Z" fill="rgba(110,110,110,0.65)"/><path d="M583.00 52.00H663.00A5 5 0 0 1 668.00 57.00V64.50H578.00V57.00A5 5 0 0 1 583.00 52.00Z" fill="url(#hdr)"/><path d="M580.6 55.8h6.8l-3.4 7z" fill="#38383a"/><text x="591.92" y="61.70" font-size="8.2" fill="#000" stroke="#000" stroke-width="0.1" textLength="56.94" lengthAdjust="spacingAndGlyphs">Material Output</text><text x="588.73" y="74.70" font-size="8.2" fill="#000" stroke="#000" stroke-width="0.1" textLength="28.24" lengthAdjust="spacingAndGlyphs">Surface</text><text x="589.06" y="88.50" font-size="8.2" fill="#000" stroke="#000" stroke-width="0.1" textLength="28.16" lengthAdjust="spacingAndGlyphs">Volume</text><text x="589.03" y="102.80" font-size="8.2" fill="#000" stroke="#000" stroke-width="0.1" textLength="49.63" lengthAdjust="spacingAndGlyphs">Displacement</text><circle cx="577.6" cy="71" r="3.3" fill="#63c763" stroke="#181818" stroke-width="1.0"/><circle cx="577.6" cy="85" r="3.3" fill="#63c763" stroke="#181818" stroke-width="1.0"/><circle cx="577.6" cy="99" r="3.3" fill="#a3a3a3" stroke="#181818" stroke-width="1.0"/></svg></body></html>
